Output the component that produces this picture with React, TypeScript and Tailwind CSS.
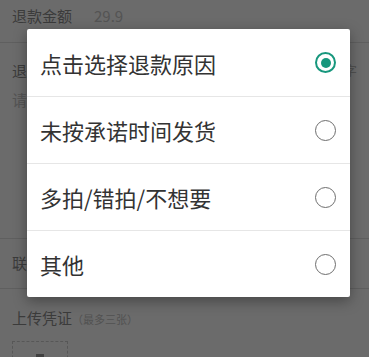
import { useState } from "react";

const reasons = ["点击选择退款原因", "未按承诺时间发货", "多拍/错拍/不想要", "其他"];

export default function App() {
    const [picked, setPicked] = useState(0);

    return (
        <div className="relative w-[369px] h-[357px] overflow-hidden bg-white font-['Noto_Sans_CJK_SC',sans-serif]">
            {/* page underneath */}
            <div className="flex flex-col">
                <div className="h-[43px] flex items-center gap-[22px] px-3 pb-[9px] border-b border-[#e2e2e2] text-[15px]">
                    <span className="text-[#8e8e8e]">退款金额</span>
                    <span className="text-[#c8c8c8]">29.9</span>
                </div>
                <div className="h-[196px] px-3 pt-[17px] border-b border-[#e2e2e2] text-[15px]">
                    <div className="flex justify-between">
                        <span className="text-[#8e8e8e]">退款说明</span>
                        <span className="text-[13px] text-[#c0c0c0]">最多200字</span>
                    </div>
                    <div className="mt-[6px] text-[#c8c8c8]">请输入退款说明</div>
                </div>
                <div className="h-[50px] flex items-center px-3 border-b border-[#e2e2e2] text-[15px] text-[#8e8e8e]">
                    联系电话
                </div>
                <div className="px-3 pt-[18px] flex items-baseline text-[15px] text-[#8e8e8e]">
                    上传凭证
                    <span className="text-[11px] text-[#c4c4c4]">（最多三张）</span>
                </div>
                <div className="mx-3 mt-[11px] w-[56px] h-[56px] border border-dashed border-[#d0d0d0] flex justify-center pt-[12px]">
                    <div className="w-[8px] h-[8px] bg-[#999]" />
                </div>
            </div>

            {/* mask */}
            <div className="absolute inset-0 bg-[rgba(0,0,0,0.58)]" />

            {/* dialog */}
            <div className="absolute left-[27px] top-[29px] w-[323px] bg-white rounded-[2px] shadow-[0_4px_14px_rgba(0,0,0,0.35)]">
                {reasons.map((r, i) => (
                    <button
                        key={r}
                        onClick={() => setPicked(i)}
                        className={`w-full h-[67px] flex items-center justify-between pl-[13px] pr-[14px] text-left ${i > 0 ? "border-t border-[#e6e6e6]" : ""}`}
                    >
                        <span className="text-[22px] leading-none text-[#333]">{r}</span>
                        {picked === i ? (
                            <span className="w-[21px] h-[21px] rounded-full border-[2.5px] border-[#17977d] flex items-center justify-center">
                                <span className="w-[10px] h-[10px] rounded-full bg-[#17977d]" />
                            </span>
                        ) : (
                            <span className="w-[21px] h-[21px] rounded-full border-[1.8px] border-[#6e6e6e]" />
                        )}
                    </button>
                ))}
            </div>
        </div>
    );
}
